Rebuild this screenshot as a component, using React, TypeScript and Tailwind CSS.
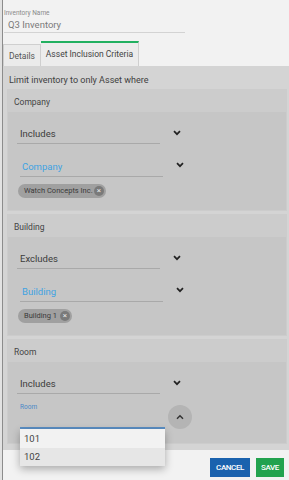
import React from "react";

const font = { fontFamily: "Roboto, 'Noto Sans', sans-serif" };

function ChevronDown() {
  return (
    <svg width="8" height="6" viewBox="0 0 8 6" className="block">
      <path d="M1 1.2 L4 4.2 L7 1.2" fill="none" stroke="#222" strokeWidth="1.7" />
    </svg>
  );
}

function ChevronUp() {
  return (
    <svg width="8" height="6" viewBox="0 0 8 6" className="block">
      <path d="M1 4.8 L4 1.8 L7 4.8" fill="none" stroke="#333" strokeWidth="1.5" />
    </svg>
  );
}

function Chip({ label, width }: { label: string; width: string }) {
  return (
    <div
      className={`ml-[10px] mt-[7px] flex h-[14px] ${width} items-center justify-between rounded-full bg-[#a0a0a0] pl-[6px] pr-[2px]`}>
      <span className="text-[7.5px] leading-[10px] text-[#3a3a3a]">{label}</span>
      <span className="flex h-[10px] w-[10px] items-center justify-center rounded-full bg-[#7a7a7a] text-[8px] leading-none text-[#e8e8e8]">
        ×
      </span>
    </div>
  );
}

function OperatorSelect({ value }: { value: string }) {
  return (
    <div className="flex items-start">
      <div className="ml-[9px] w-[143px] border-b border-[#a9a9a9] pb-[3px] pl-[3px] pt-[16px] text-[9.5px] leading-[12px] text-[#3c3c3c]">
        {value}
      </div>
      <div className="ml-[13px] mt-[18px]">
        <ChevronDown />
      </div>
    </div>
  );
}

function Section({
  title,
  operator,
  field,
  chip,
  chipWidth,
}: {
  title: string;
  operator: string;
  field: string;
  chip: string;
  chipWidth: string;
}) {
  return (
    <div className="bg-[#cccccc] px-[1px] pb-[1px]">
      <div className="h-[23px] pl-[6px] pt-[8px] text-[8.5px] leading-[10px] text-[#444]">{title}</div>
      <div className="bg-[#c6c6c6] pb-[12px]">
        <OperatorSelect value={operator} />
        <div className="mt-[17px] flex items-start">
          <div className="ml-[12px] w-[143px] border-b border-[#a9a9a9] pb-[3px] pl-[2px] text-[9.5px] leading-[12px] text-[#3ea3e2]">
            {field}
          </div>
          <div className="ml-[13px] mt-[1px]">
            <ChevronDown />
          </div>
        </div>
        <Chip label={chip} width={chipWidth} />
      </div>
    </div>
  );
}

export default function App() {
  return (
    <div className="h-[480px] w-[289px] overflow-hidden bg-[#e2e2e2] pl-[2px]" style={font}>
      <div className="flex h-full flex-col border-l border-[#8c8c8c] bg-[#f2f2f2]">
        {/* name field */}
        <div className="ml-[1px] mt-[9px] w-[181px] border-b border-[#d3d3d3]">
          <div className="h-[8px] text-[6.5px] leading-[8px] text-[#8a8a8a]">Inventory Name</div>
          <div className="pb-[1px] pl-[4px] pt-[2px] text-[9.5px] leading-[12px] text-[#7a7a7a]">Q3 Inventory</div>
        </div>

        {/* tabs */}
        <div className="mt-[8px] flex h-[25px] items-end">
          <div className="flex h-[22px] w-[38px] items-center justify-center border border-b-0 border-[#cfcfcf] bg-[#ebebeb] pt-[2px] text-[8.5px] text-[#555]">
            Details
          </div>
          <div className="flex h-[25px] w-[98px] items-center justify-center border-r border-t-2 border-r-[#cfcfcf] border-t-[#22b060] bg-[#ececec] text-[8.5px] text-[#444]">
            Asset Inclusion Criteria
          </div>
        </div>

        {/* criteria panel */}
        <div className="bg-[#d4d4d4] pb-[6px] pl-[4px] pr-[2px]">
          <div className="h-[23px] pl-[2px] pt-[9px] text-[9px] leading-[10px] text-[#404040]">
            Limit inventory to only Asset where
          </div>
          <div className="flex flex-col gap-[3px]">
            <Section
              title="Company"
              operator="Includes"
              field="Company"
              chip="Watch Concepts Inc."
              chipWidth="w-[88px]"
            />
            <Section
              title="Building"
              operator="Excludes"
              field="Building"
              chip="Building 1"
              chipWidth="w-[54px]"
            />
            <div className="bg-[#cccccc] px-[1px] pb-[1px]">
              <div className="h-[23px] pl-[6px] pt-[8px] text-[8.5px] leading-[10px] text-[#444]">Room</div>
              <div className="bg-[#c6c6c6] pb-[14px]">
                <OperatorSelect value="Includes" />
                <div className="mt-[9px] flex items-center">
                  <div className="relative ml-[12px] w-[145px] border-b-2 border-[#5b8fc4]">
                    <div className="h-[24px] text-[6.5px] leading-[8px] text-[#4a88c6]">Room</div>
                    <div className="absolute left-0 top-[26px] z-10 w-[145px] bg-[#f2f2f2] shadow-[0_3px_8px_rgba(0,0,0,0.3)]">
                      <div className="h-[19px] pl-[4px] pt-[4px] text-[9.5px] leading-[12px] text-[#444]">101</div>
                      <div className="h-[18px] bg-[#e6e6e6] pl-[4px] pt-[3px] text-[9.5px] leading-[12px] text-[#444]">102</div>
                    </div>
                  </div>
                  <div className="ml-[3px] mt-[2px] flex h-[24px] w-[24px] items-center justify-center rounded-full bg-[#b4b4b4]">
                    <ChevronUp />
                  </div>
                </div>
              </div>
            </div>
          </div>
        </div>

        {/* footer */}
        <div className="flex justify-end gap-[6px] pr-[5px] pt-[8px]">
          <button className="h-[19px] w-[40px] bg-[#1a62ae] text-[8px] font-medium tracking-[-0.4px] text-white">CANCEL</button>
          <button className="h-[19px] w-[28px] bg-[#22a24e] text-[8px] font-medium tracking-[-0.4px] text-white">SAVE</button>
        </div>
      </div>
    </div>
  );
}
